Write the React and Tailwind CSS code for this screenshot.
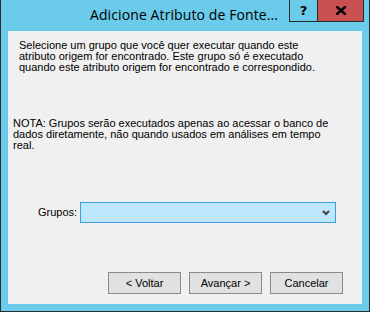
export default function App() {
  const body = { fontFamily: '"Liberation Sans", Arial, sans-serif' };
  return (
    <div className="w-[370px] h-[312px] bg-[#6bcbea] border-x border-b border-[#2b2b2b] flex flex-col">
      <div className="h-[31px] flex items-start shrink-0">
        <span
          className="block ml-[89px] mt-[7px] text-[14px] leading-[15px] text-black whitespace-nowrap tracking-[0.1px] font-['Open_Sans',sans-serif]"
        >
          Adicione Atributo de Fonte...
        </span>
        <div className="ml-auto mr-[5px] flex">
          <div className="w-[28px] h-[22px] border-l border-b border-[#2b2b2b] flex items-center justify-center">
            <span className="text-[13px] font-bold text-black leading-none" style={{ fontFamily: '"DejaVu Sans", sans-serif' }}>?</span>
          </div>
          <div className="w-[47px] h-[22px] bg-[#c75050] border-x border-b border-[#2b2b2b] flex items-center justify-center">
            <svg width="10" height="9" viewBox="0 0 10 9">
              <path d="M1 1 L9 8 M9 1 L1 8" stroke="#000" strokeWidth="2.4" strokeLinecap="square" />
            </svg>
          </div>
        </div>
      </div>
      <div className="flex-1 px-[7px] pb-[7px] flex">
        <div className="flex-1 bg-[#f0f0f0] flex flex-col text-[11px] leading-[11px] text-black" style={body}>
          <p className="pl-[11px] pt-[9px]">
            Selecione um grupo que você quer executar quando este<br />
            atributo origem for encontrado. Este grupo só é executado<br />
            quando este atributo origem for encontrado e correspondido.
          </p>
          <p className="pl-[5px] mt-[45px]">
            NOTA: Grupos serão executados apenas ao acessar o banco de<br />
            dados diretamente, não quando usados em análises em tempo<br />
            real.
          </p>
          <div className="flex items-center mt-[51px] pl-[30px]">
            <span className="w-[42px]">Grupos:</span>
            <div className="w-[256px] h-[21px] bg-[#bee6fd] border border-[#3c9fe0] flex items-center justify-end pr-[5px]">
              <svg width="8" height="6" viewBox="0 0 8 6">
                <path d="M1 1 L4 4 L7 1" stroke="#444" strokeWidth="2" fill="none" />
              </svg>
            </div>
          </div>
          <div className="mt-auto mb-[10px] flex justify-end gap-[8px] pr-[19px]">
            <button className="w-[73px] h-[22px] bg-[#e1e1e1] border border-[#8a8a8a] text-[11px]">&lt; Voltar</button>
            <button className="w-[73px] h-[22px] bg-[#e1e1e1] border border-[#8a8a8a] text-[11px]">Avançar &gt;</button>
            <button className="w-[73px] h-[22px] bg-[#e1e1e1] border border-[#8a8a8a] text-[11px]">Cancelar</button>
          </div>
        </div>
      </div>
    </div>
  );
}
